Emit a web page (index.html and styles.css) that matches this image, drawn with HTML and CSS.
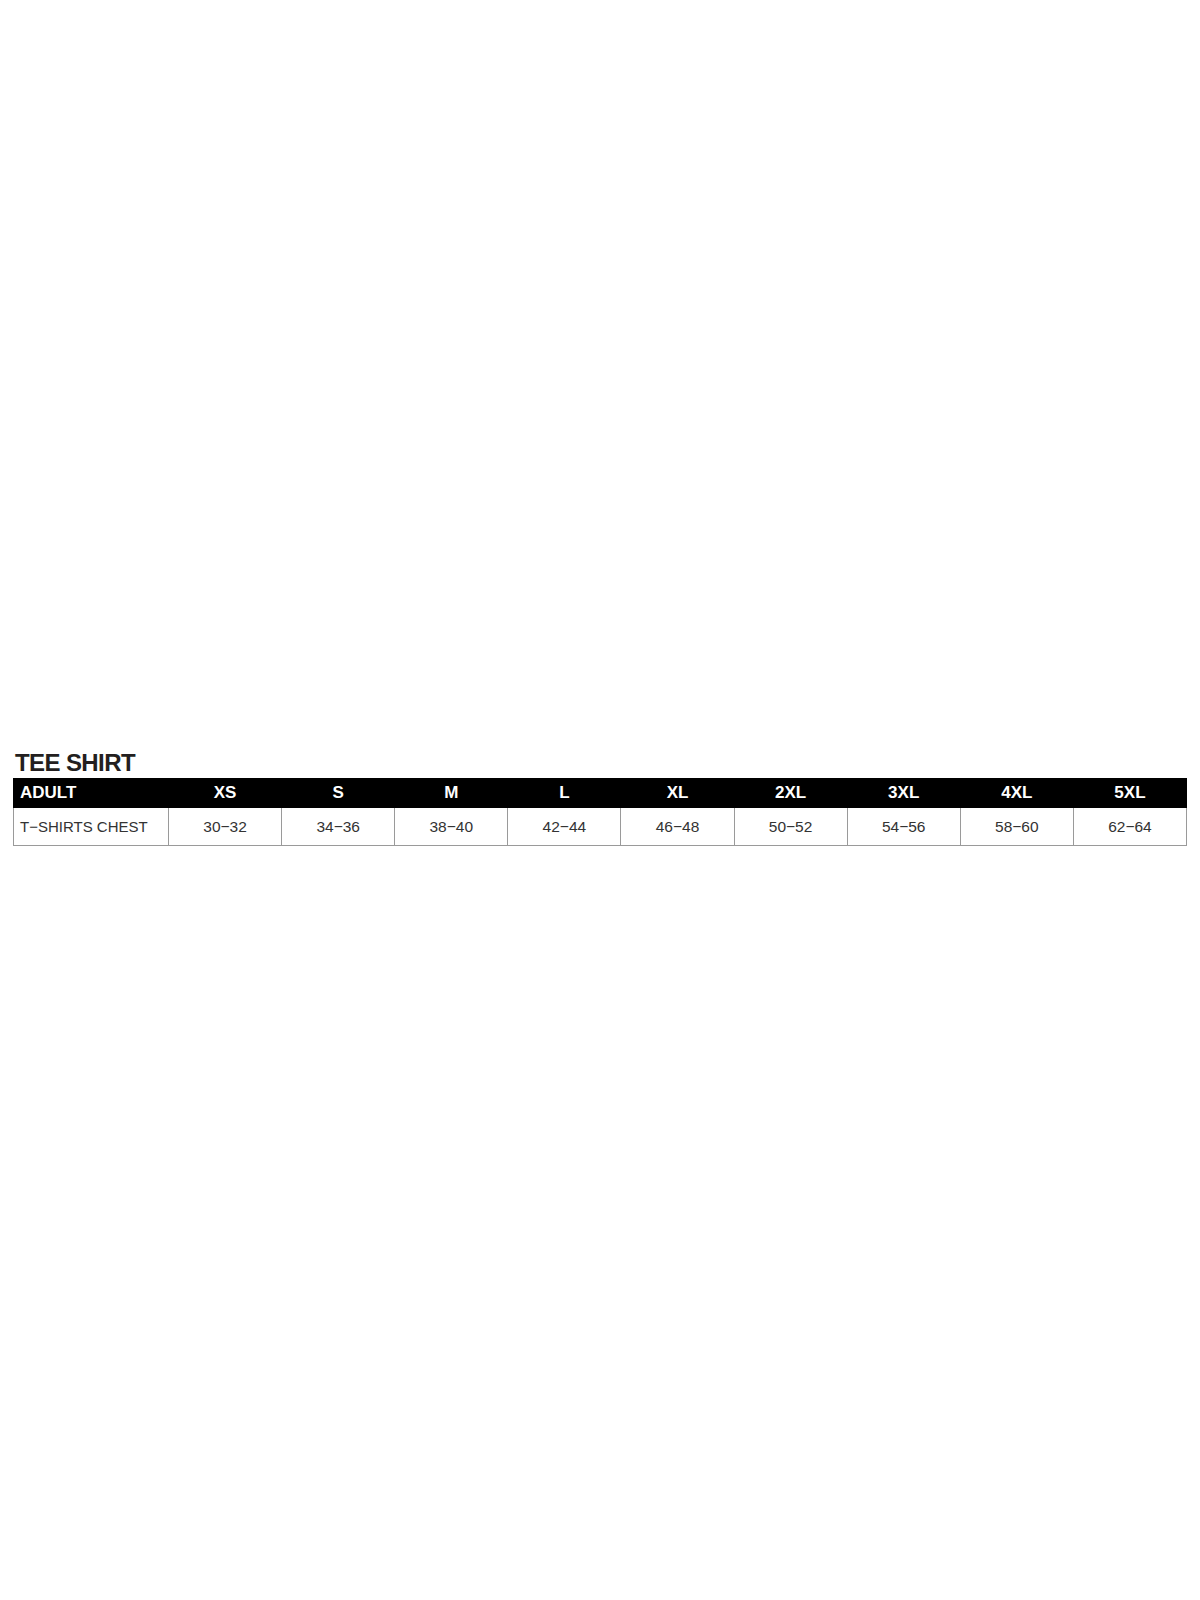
FILE: index.html
```html
<!DOCTYPE html>
<html lang="en">
<head>
<meta charset="utf-8">
<title>Tee Shirt Size Chart</title>
<link rel="stylesheet" href="styles.css">
</head>
<body>
<main class="page">
  <section class="chart">
    <h2 class="chart-title">TEE SHIRT</h2>
    <table class="size-table">
      <colgroup>
        <col class="col-label">
        <col><col><col><col><col><col><col><col><col>
      </colgroup>
      <thead>
        <tr>
          <th class="label">ADULT</th>
          <th>XS</th><th>S</th><th>M</th><th>L</th><th>XL</th>
          <th>2XL</th><th>3XL</th><th>4XL</th><th>5XL</th>
        </tr>
      </thead>
      <tbody>
        <tr>
          <td class="label">T&#8722;SHIRTS CHEST</td>
          <td>30&#8722;32</td><td>34&#8722;36</td><td>38&#8722;40</td><td>42&#8722;44</td><td>46&#8722;48</td>
          <td>50&#8722;52</td><td>54&#8722;56</td><td>58&#8722;60</td><td>62&#8722;64</td>
        </tr>
      </tbody>
    </table>
  </section>
</main>
</body>
</html>
```

FILE: styles.css
```css
html, body {
  margin: 0;
  padding: 0;
  background: #ffffff;
}

body {
  font-family: "Liberation Sans", Arial, sans-serif;
  color: #2a2a2a;
}

.page {
  height: 1600px;
  display: flex;
  flex-direction: column;
  justify-content: flex-start;
  padding: 749px 13px 0 13px;
  box-sizing: border-box;
}

.chart {
  width: 1174px;
}

.chart-title {
  margin: 0 0 1px 2px;
  font-size: 24px;
  line-height: 28px;
  font-weight: 700;
  letter-spacing: -0.6px;
  color: #231f20;
}

.size-table {
  width: 1174px;
  table-layout: fixed;
  border-collapse: collapse;
}

.col-label {
  width: 155px;
}

.size-table th {
  background: #000000;
  color: #ffffff;
  font-size: 17px;
  font-weight: 700;
  height: 28px;
  padding: 0;
  text-align: center;
  border: 1px solid #000;
}

.size-table th.label {
  text-align: left;
  padding-left: 6px;
}

.size-table td {
  height: 37px;
  padding: 0;
  text-align: center;
  font-size: 15.5px;
  color: #333333;
  border: 1px solid #9a9a9a;
}

.size-table td.label {
  text-align: left;
  padding-left: 6px;
  font-size: 15px;
}
```
